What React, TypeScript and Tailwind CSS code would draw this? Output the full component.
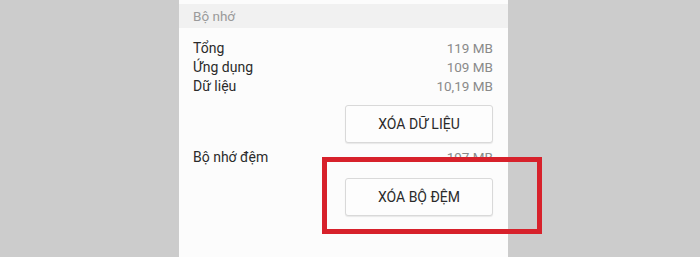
export default function App() {
  const rows = [
    { label: "Tổng", value: "119 MB" },
    { label: "Ứng dụng", value: "109 MB" },
    { label: "Dữ liệu", value: "10,19 MB" },
  ];

  return (
    <div className="relative h-[257px] w-[700px] overflow-hidden bg-[#cccccc] font-['Roboto',sans-serif]">
      <div className="ml-[179px] flex h-full w-[329px] flex-col bg-[#fcfcfc] pt-[4px]">
        {/* section header */}
        <div className="flex h-[24px] items-center bg-[#f1f1f1] pl-[14px] text-[13.5px] text-[#9a9a9a]">
          Bộ nhớ
        </div>

        <div className="flex flex-col pl-[14px] pr-[15px] pt-[11px]">
          {rows.map((r) => (
            <div key={r.label} className="flex h-[19px] items-center justify-between">
              <span className="text-[14px] text-[#2b2b2b]">{r.label}</span>
              <span className="text-[13.5px] text-[#8a8a8a]">{r.value}</span>
            </div>
          ))}

          <div className="mt-[9px] flex justify-end">
            <button className="flex h-[38px] w-[148px] items-center justify-center rounded-[3px] border border-[#d9d9d9] bg-[#fdfdfd] text-[14px] text-[#2a2a2a] shadow-[0_1px_1px_rgba(0,0,0,0.08)]">
              XÓA DỮ LIỆU
            </button>
          </div>

          <div className="mt-[4px] flex h-[20px] items-center justify-between">
            <span className="text-[14px] text-[#2b2b2b]">Bộ nhớ đệm</span>
            <span className="text-[13.5px] text-[#8a8a8a]">197 MB</span>
          </div>

          <div className="mt-[11px] flex justify-end">
            <button className="flex h-[38px] w-[148px] items-center justify-center rounded-[3px] border border-[#d9d9d9] bg-[#fdfdfd] text-[14px] text-[#2a2a2a] shadow-[0_1px_1px_rgba(0,0,0,0.08)]">
              XÓA BỘ ĐỆM
            </button>
          </div>
        </div>
      </div>

      {/* red highlight box */}
      <div className="absolute left-[322px] top-[157px] h-[77px] w-[220px] border-[5px] border-[#d7212b]" />
    </div>
  );
}
